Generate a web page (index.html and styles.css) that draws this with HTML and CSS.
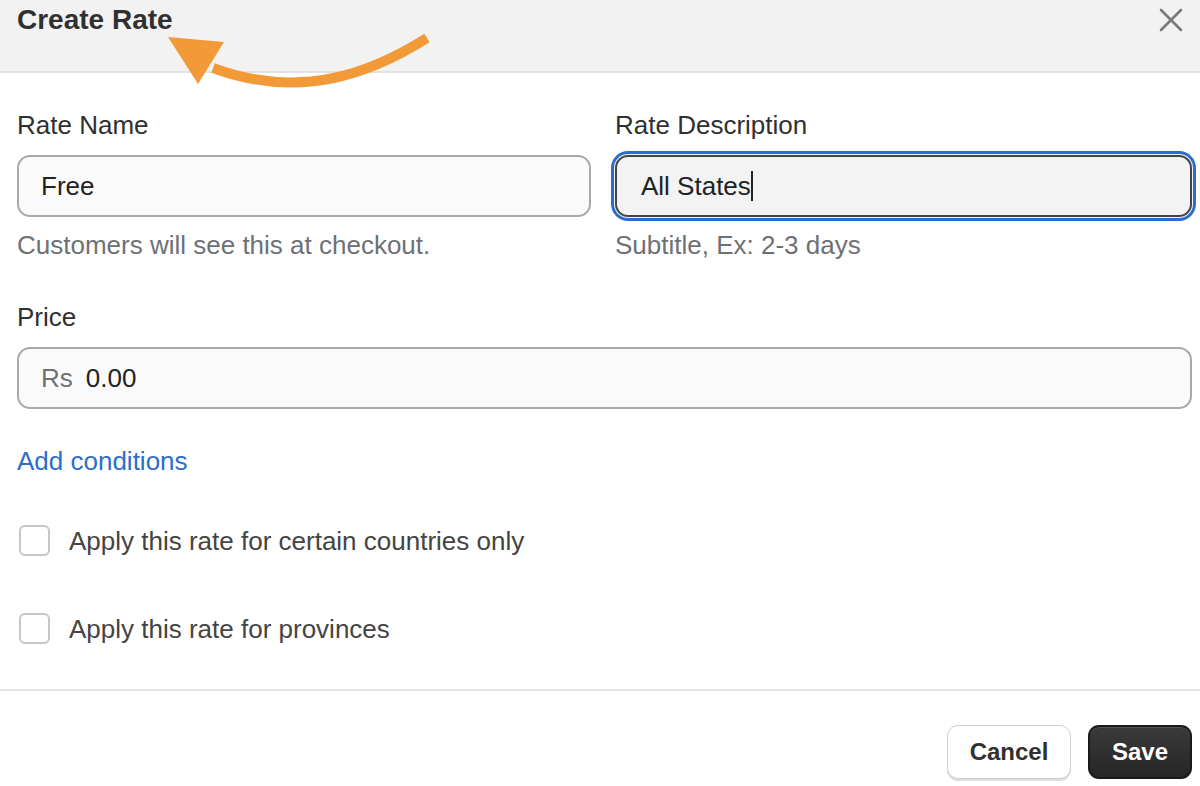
FILE: index.html
```html
<!DOCTYPE html>
<html>
<head>
<meta charset="utf-8">
<link rel="stylesheet" href="styles.css">
</head>
<body>
<div class="modal">
  <header class="head">
    <h1 class="title">Create Rate</h1>
    <svg class="close" width="26" height="26" viewBox="0 0 26 26"><path d="M3 3 L23 23 M23 3 L3 23" stroke="#7a7a7a" stroke-width="2.6" fill="none" stroke-linecap="round"/></svg>
    <svg class="arrow" width="440" height="100" viewBox="0 0 440 100"><path d="M427 38 C 370 74 300 100 213 68" stroke="#f29a38" stroke-width="10" fill="none"/><polygon points="168,37 224,42 198,84" fill="#f29a38"/></svg>
  </header>
  <main class="content">
    <div class="row2">
      <div class="field">
        <label class="label">Rate Name</label>
        <div class="input">Free</div>
        <div class="help">Customers will see this at checkout.</div>
      </div>
      <div class="field">
        <label class="label">Rate Description</label>
        <div class="input focused">All States<span class="caret"></span></div>
        <div class="help">Subtitle, Ex: 2-3 days</div>
      </div>
    </div>
    <div class="field price">
      <label class="label">Price</label>
      <div class="input"><span class="prefix">Rs</span>0.00</div>
    </div>
    <a class="link">Add conditions</a>
    <div class="check first"><span class="box"></span><span>Apply this rate for certain countries only</span></div>
    <div class="check second"><span class="box"></span><span>Apply this rate for provinces</span></div>
  </main>
  <footer class="foot">
    <button class="btn cancel">Cancel</button>
    <button class="btn save">Save</button>
  </footer>
</div>
</body>
</html>
```

FILE: styles.css
```css
* { box-sizing: border-box; }
html, body { margin: 0; padding: 0; background: #fff; }
body { font-family: "Liberation Sans", Arial, sans-serif; color: #303030; width: 1200px; height: 786px; overflow: hidden; }
.modal { display: flex; flex-direction: column; }
.head { position: relative; height: 73px; background: #f2f2f2; border-bottom: 2px solid #e2e2e2; padding: 2px 17px 0; }
.title { margin: 0; font-size: 28px; font-weight: 700; color: #303030; line-height: 36px; }
.close { position: absolute; right: 16px; top: 7px; }
.arrow { position: absolute; left: 0; top: 0; }
.content { padding: 37px 8px 0 17px; display: flex; flex-direction: column; }
.row2 { display: grid; grid-template-columns: 574px 577px; column-gap: 24px; }
.field { display: flex; flex-direction: column; }
.label { font-size: 26px; line-height: 30px; color: #303030; }
.input { margin-top: 15px; height: 62px; border: 2px solid #a9a9a9; border-radius: 13px; background: #fafafa; font-size: 26px; color: #202223; padding-left: 22px; display: flex; align-items: center; }
.input.focused { border: 2px solid #444; background: #f3f3f3; box-shadow: 0 0 0 1px #f0f4fa, 0 0 0 4px #2c6ecb; padding-left: 24px; }
.caret { display: inline-block; width: 2px; height: 30px; background: #202223; margin-left: 0px; }
.help { margin-top: 13px; font-size: 26px; line-height: 30px; color: #6d7175; }
.price { margin-top: 42px; }
.price .input { margin-top: 15px; }
.prefix { color: #6d7175; margin-right: 13px; }
.link { margin-top: 37px; font-size: 26px; line-height: 30px; color: #2c6ecb; }
.check { display: flex; align-items: center; gap: 19px; font-size: 26px; line-height: 30px; color: #444; padding-left: 2px; }
.check.first { margin-top: 49px; }
.check.second { margin-top: 57px; }
.box { width: 31px; height: 31px; border: 2px solid #c4c6c8; border-radius: 6px; background: #fff; flex: none; }
.foot { margin-top: 45px; border-top: 2px solid #e3e3e3; display: flex; justify-content: flex-end; gap: 17px; padding: 34px 8px 0 0; }
.btn { height: 54px; border-radius: 11px; font-family: "Liberation Sans", Arial, sans-serif; font-size: 24px; font-weight: 700; padding: 0; }
.cancel { width: 124px; background: #fff; color: #303030; border: 1.5px solid #cfcfcf; box-shadow: 0 2px 0 #dedede; }
.save { width: 104px; background: linear-gradient(#3a3a3a, #262626); color: #fff; border: 2px solid #1a1a1a; box-shadow: inset 0 1px 0 #555; }
```
